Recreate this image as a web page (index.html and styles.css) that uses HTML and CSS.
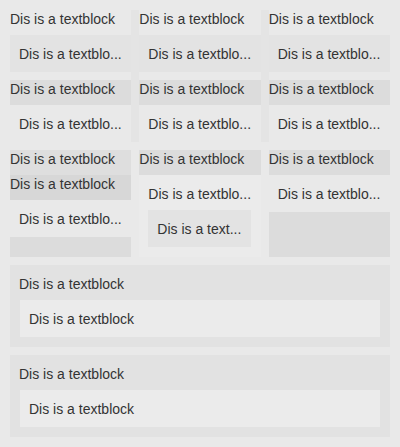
FILE: index.html
```html
<!DOCTYPE html>
<html>
<head>
<meta charset="utf-8">
<link rel="stylesheet" href="styles.css">
</head>
<body>
<div class="page">
  <div class="top">
    <div class="col">
      <div class="cell">
        <div class="hdr">Dis is a textblock</div>
        <div class="body shade">Dis is a textblo...</div>
      </div>
      <div class="cell">
        <div class="hdr dark">Dis is a textblock</div>
        <div class="body">Dis is a textblo...</div>
      </div>
    </div>
    <div class="col">
      <div class="cell">
        <div class="hdr">Dis is a textblock</div>
        <div class="body shade">Dis is a textblo...</div>
      </div>
      <div class="cell">
        <div class="hdr dark">Dis is a textblock</div>
        <div class="body">Dis is a textblo...</div>
      </div>
    </div>
    <div class="col">
      <div class="cell">
        <div class="hdr">Dis is a textblock</div>
        <div class="body shade">Dis is a textblo...</div>
      </div>
      <div class="cell">
        <div class="hdr dark">Dis is a textblock</div>
        <div class="body">Dis is a textblo...</div>
      </div>
    </div>
  </div>

  <div class="mid">
    <div class="stack">
      <div class="hdr mid-dark">Dis is a textblock</div>
      <div class="hdr darker">Dis is a textblock</div>
      <div class="body">Dis is a textblo...</div>
      <div class="fill"></div>
    </div>
    <div class="stack">
      <div class="hdr dark">Dis is a textblock</div>
      <div class="nest">
        <div class="hdr">Dis is a textblo...</div>
        <div class="body shade">Dis is a text...</div>
      </div>
    </div>
    <div class="stack">
      <div class="hdr dark">Dis is a textblock</div>
      <div class="body">Dis is a textblo...</div>
      <div class="fill"></div>
    </div>
  </div>

  <div class="box">
    <div class="hdr">Dis is a textblock</div>
    <div class="body light">Dis is a textblock</div>
  </div>
  <div class="box">
    <div class="hdr">Dis is a textblock</div>
    <div class="body light">Dis is a textblock</div>
  </div>
</div>
</body>
</html>
```
FILE: styles.css
```css
html, body {
  margin: 0;
  background: #e9e9e9;
}
body {
  font-family: "Liberation Sans", Arial, sans-serif;
  font-size: 14px;
  color: #333333;
}
.page {
  padding: 10px;
  display: flex;
  flex-direction: column;
  gap: 8px;
}
.top {
  display: grid;
  grid-template-columns: repeat(3, minmax(0, 1fr));
  column-gap: 8px;
  background: #e4e4e4;
}
.col {
  display: flex;
  flex-direction: column;
  gap: 8px;
  min-width: 0;
  background: #e9e9e9;
}
.hdr {
  height: 25px;
  line-height: 19px;
  white-space: nowrap;
}
.body {
  padding: 10px 9px 8px;
  line-height: 19px;
  white-space: nowrap;
}
.shade { background: #e3e3e3; }
.dark { background: #dcdcdc; }
.mid-dark { background: #dedede; }
.darker { background: #d7d7d7; }
.light { background: #ebebeb; }

.mid {
  display: grid;
  grid-template-columns: repeat(3, minmax(0, 1fr));
  column-gap: 8px;
}
.stack {
  display: flex;
  flex-direction: column;
  min-width: 0;
}
.fill {
  flex: 1;
  background: #dcdcdc;
}
.nest {
  padding: 10px 10px 10px 9px;
  background: #ebebeb;
}
.box {
  padding: 10px 10px 10px 9px;
  background: #e2e2e2;
}
.box .light {
  margin-left: 1px;
}
```
